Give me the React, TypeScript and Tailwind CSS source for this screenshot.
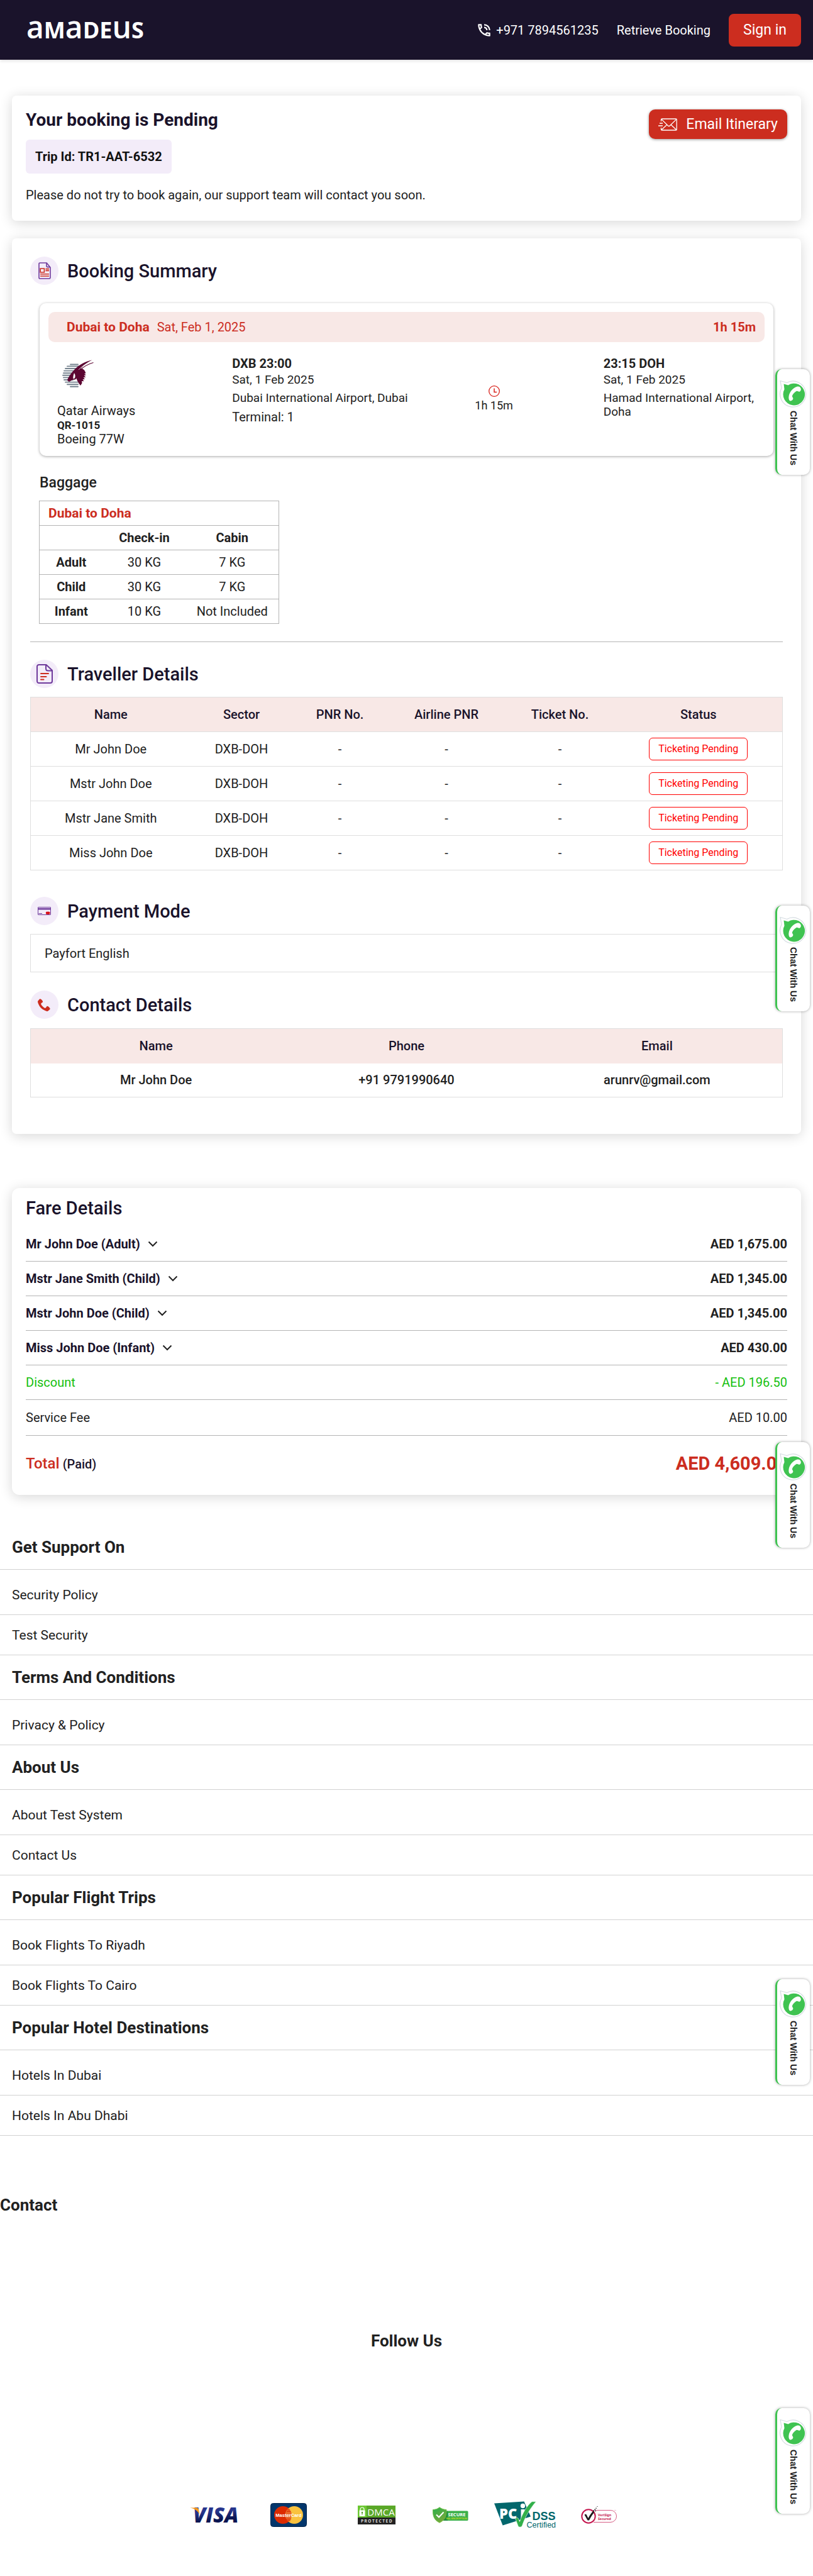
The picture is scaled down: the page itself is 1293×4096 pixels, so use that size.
import React from "react";
import { MdOutlinePhoneInTalk } from "react-icons/md";
import { ImPhone } from "react-icons/im";

const travellers = ["Mr John Doe", "Mstr John Doe", "Mstr Jane Smith", "Miss John Doe"];

const baggage = [
  ["Adult", "30 KG", "7 KG"],
  ["Child", "30 KG", "7 KG"],
  ["Infant", "10 KG", "Not Included"],
];

const fares = [
  ["Mr John Doe (Adult)", "AED 1,675.00"],
  ["Mstr Jane Smith (Child)", "AED 1,345.00"],
  ["Mstr John Doe (Child)", "AED 1,345.00"],
  ["Miss John Doe (Infant)", "AED 430.00"],
];

const footerGroups = [
  { title: "Get Support On", links: ["Security Policy", "Test Security"] },
  { title: "Terms And Conditions", links: ["Privacy & Policy"] },
  { title: "About Us", links: ["About Test System", "Contact Us"] },
  { title: "Popular Flight Trips", links: ["Book Flights To Riyadh", "Book Flights To Cairo"] },
  { title: "Popular Hotel Destinations", links: ["Hotels In Dubai", "Hotels In Abu Dhabi"] },
];

function Logo() {
  return (
    <a
      href="#"
      aria-label="Amadeus"
      className="flex items-baseline pb-2.5 font-['Open_Sans',sans-serif] leading-none text-white"
    >
      <span className="text-[48px] font-semibold">a</span>
      <span className="text-[36px] font-bold">M</span>
      <span className="text-[48px] font-semibold">a</span>
      <span className="text-[36px] font-bold">DE</span>
      <span className="text-[48px] font-semibold">u</span>
      <span className="text-[36px] font-bold">S</span>
    </a>
  );
}

function MailIcon() {
  return (
    <svg width="30" height="20" viewBox="0 0 30 20" fill="none" stroke="#fff" strokeWidth="1.3">
      <path d="M4.5 5V2.2C4.5 1.4 5 1 5.8 1H28c.8 0 1.2.4 1.2 1.2v15.6c0 .8-.4 1.2-1.2 1.2H5.8c-.8 0-1.3-.4-1.3-1.2V15" />
      <path d="M5 1.6 15.5 12c.8.8 1.9.8 2.7 0L28.8 1.6M5 18.4l8.6-8M28.8 18.4l-8.6-8" />
      <path d="M2 8h5M0 12h7" />
    </svg>
  );
}

function SummaryIcon() {
  return (
    <svg width="20" height="27" viewBox="0 0 20 27" fill="none" strokeWidth="1.6">
      <path d="M2.5 1h10.7L19 8.2v16.3c0 .9-.6 1.5-1.5 1.5h-15C1.6 26 1 25.4 1 24.5v-22C1 1.6 1.6 1 2.5 1Z" stroke="#6f3a9c" />
      <path d="M13 1.2v4.6c0 1.2.6 1.8 1.8 1.8h4" stroke="#6f3a9c" />
      <path d="M3.2 10h6.2v6H3.2Z" stroke="#cc2d1f" />
      <path d="M11.5 10.6H17M11.5 13.4H17M3 18.800h14M3 22h14" stroke="#cc2d1f" />
    </svg>
  );
}

function DocumentIcon() {
  return (
    <svg width="26" height="31" viewBox="0 0 26 31" fill="none" strokeWidth="2" strokeLinecap="round" strokeLinejoin="round">
      <path d="M4 1h11.5L25 10v17c0 1.8-1.2 3-3 3H4c-1.8 0-3-1.2-3-3V4c0-1.8 1.2-3 3-3Z" stroke="#6f3a9c" />
      <path d="M15 1.5V7c0 2.2 1.2 3.5 3.5 3.5h6" stroke="#6f3a9c" />
      <path d="M7 15h12M7 20h8.5M7 24.5h4.5" stroke="#cc2d1f" />
    </svg>
  );
}

function CardIcon() {
  return (
    <svg width="21" height="13" viewBox="0 0 21 13" fill="none">
      <rect x="0.5" y="0.5" width="20" height="12" rx="0.5" stroke="#6f3a9c" />
      <rect x="0" y="2" width="21" height="2.5" fill="#6f3a9c" />
      <path d="M1.5 10.5H7" stroke="#6f3a9c" />
      <circle cx="15" cy="9.8" r="2.2" fill="#d8101a" />
      <circle cx="17.4" cy="9.8" r="2.2" fill="#d8101a" />
    </svg>
  );
}

function ClockIcon() {
  return (
    <svg width="18" height="18" viewBox="0 0 18 18" fill="none" stroke="#d8201a">
      <circle cx="9" cy="9" r="8.3" strokeWidth="1.3" />
      <path d="M9 4.5v6h4" strokeWidth="1.5" />
    </svg>
  );
}

function OryxLogo() {
  return (
    <svg width="50" height="44" viewBox="0 0 50 44" fill="none">
      <path
        d="M13 7.5h12M8 10.4h18M5 14h17M3 17.6h17M2 21.2h16M1 24.8h14M2 28.4h12M3 32h14M5 35.6h20M8 39.2h17M13 42.7h12"
        stroke="#76838f"
        strokeWidth="1.9"
        strokeLinecap="round"
      />
      <path
        d="M47.5.5C40 4 34 8.5 29.5 14c3 0 5.5 2 6.5 4l1.5 3.6-2.500.6 3 2-3.500 1 3 2.500-4 .6 2.500 2.600-3.500.4 2 3-3.500-.2.5 3.200-2.500 3.700c-3.500-4-5.500-8-6.500-11.500-1 2-3 2.500-5 2l-6.500 3.400c-1-.5-2.500-1-3-3 2.500-5.500 6.500-11 12-16.800C27 8 36 2.500 47.500.5Z"
        fill="#5c0632"
      />
      <path d="M49.5 4.5C41 7 34.5 10.5 29 16" stroke="#5c0632" strokeWidth="1.1" />
      <path d="M19 21c-1.5 4-2 7-1.500 9.500l2.500-1.200c1-2.600.8-5.800-1-8.300Z" fill="#fff" />
      <path d="M46.5 1.8C38 6 31 10.5 26 16" stroke="#fff" strokeWidth="0.7" />
    </svg>
  );
}

function Chevron() {
  return (
    <svg width="16" height="10" viewBox="0 0 16 10" fill="none" stroke="#212121" strokeWidth="2">
      <path d="m1.5 1.5 6.5 6.5 6.5-6.5" />
    </svg>
  );
}

function ChatBadge({ position }: { position: string }) {
  return (
    <button
      type="button"
      className={
        "absolute right-[5px] z-10 flex h-[168px] w-[55px] flex-col items-center rounded-[10px] border-l-[3px] border-[#3fc351] bg-white pt-4 shadow-[0_0_4px_rgba(0,0,0,0.35)] " +
        position
      }
    >
      <svg width="46" height="46" viewBox="0 0 46 46" fill="none">
        <path
          d="M2 2.5 12.5 5.5A20.5 20.5 0 1 1 4 14Z"
          fill="#fff"
          stroke="#d6dde2"
          strokeWidth="1.3"
          strokeLinejoin="round"
        />
        <path d="M7.5 7.5 14.5 9.5A17.3 17.3 0 1 1 8.5 16Z" fill="#3fc351" />
        <path
          d="M34 13.5c1.5 2 .8 5.5-1.2 6.2-1.5.5-3.6-1.7-5.3-.7-3 1.7-5.3 4.3-6.5 7.2-.6 1.8 1.3 2.8 1.4 4.2.1 2.4-3 4.8-5.2 3.8-1.5-.7-2-3.5-1.8-6C16.2 20.5 21.5 14 28.5 11.8c2-.6 4.300-.2 5.500 1.700Z"
          fill="#fff"
        />
      </svg>
      <span className="mt-1 font-['Liberation_Sans',Arial,sans-serif] text-sm leading-4 font-bold text-[#212121] [writing-mode:vertical-rl]">
        Chat With Us
      </span>
    </button>
  );
}

function SectionTitle({ icon, children }: { icon: React.ReactNode; children: React.ReactNode }) {
  return (
    <div className="flex items-center gap-3.5">
      <span className="flex size-[45px] items-center justify-center rounded-full bg-[#f3ecf9]">{icon}</span>
      <h2 className="text-[29px] leading-[34px] font-medium text-[#1a132b]">{children}</h2>
    </div>
  );
}

function VisaLogo() {
  return (
    <svg width="86" height="48" viewBox="-4 -11 86 48">
      <defs>
        <linearGradient id="visa" x1="0" y1="0" x2="0.15" y2="1">
          <stop offset="0.45" stopColor="#26358c" />
          <stop offset="0.75" stopColor="#0a1550" />
        </linearGradient>
      </defs>
      <text x="5" y="25" fontFamily="Open Sans" fontWeight="800" fontStyle="italic" fontSize="33" fill="url(#visa)">
        VISA
      </text>
      <path d="M0 1.5h10c2.4 0 3.5 1 4 3l1.5 8C12.5 6 7 2.8 0 1.5Z" fill="#f79a1c" />
    </svg>
  );
}

function MasterCardLogo() {
  return (
    <svg width="58" height="38" viewBox="0 0 58 38">
      <rect x="0.5" y="0.5" width="57" height="37" rx="4" fill="#03366b" stroke="#02244a" />
      <circle cx="20" cy="19" r="14" fill="#dd2b00" />
      <circle cx="38" cy="19" r="14" fill="#fac23e" />
      <path d="M29 8.3a14 14 0 0 1 0 21.4 14 14 0 0 1 0-21.4Z" fill="#e8682a" />
      <path d="M27 11h4M26 13.5h6M25 25.5h8M26 28h6" stroke="#dd2b00" strokeWidth="1" />
      <text x="29" y="21.5" textAnchor="middle" fontFamily="Liberation Sans" fontWeight="700" fontSize="7.5" fill="#fff">
        MasterCard
      </text>
    </svg>
  );
}

function DmcaLogo() {
  return (
    <svg width="60" height="30" viewBox="0 0 60 30">
      <rect width="60" height="19" fill="#5aa828" />
      <rect width="14" height="19" fill="#6cc832" />
      <rect y="19" width="60" height="11" fill="#222" />
      <rect x="2.5" y="7.5" width="9" height="9.5" rx="0.8" fill="#fff" />
      <path d="M4 8V6a3 3 0 0 1 6 0v2" stroke="#fff" strokeWidth="1.2" fill="none" />
      <circle cx="7" cy="11" r="1.2" fill="#4c9a20" />
      <path d="M7 11v3.5" stroke="#4c9a20" strokeWidth="1.2" />
      <text x="37" y="15.5" textAnchor="middle" fontFamily="Open Sans" fontSize="15" fill="#fff">
        DMCA
      </text>
      <text x="30.5" y="27" textAnchor="middle" fontFamily="Open Sans" fontWeight="600" fontSize="6.5" letterSpacing="1.6" fill="#fff">
        PROTECTED
      </text>
    </svg>
  );
}

function SecureLogo() {
  return (
    <svg width="57" height="26" viewBox="0 0 57 26">
      <defs>
        <linearGradient id="shield" x1="0" y1="0" x2="0.6" y2="1">
          <stop offset="0" stopColor="#27b04c" />
          <stop offset="1" stopColor="#78a83a" />
        </linearGradient>
      </defs>
      <rect x="17" y="6.5" width="39.5" height="15.5" rx="1.5" fill="#3bb04a" />
      <path d="M17 12 24 6.5V22h-7Z" fill="#1f8a3b" />
      <path
        d="M11 .7c3 2.3 6.5 3.5 11 3.8C22.5 15 20 21 11 25.3 2.5 21 0 15 .5 4.5 5 4.2 8.5 3 11 .7Z"
        fill="url(#shield)"
        stroke="#6fbe3c"
        strokeWidth="0.8"
      />
      <path d="m6 12.5 4 4 7.5-8" stroke="#fff" strokeWidth="2" fill="none" />
      <text x="38.5" y="15" textAnchor="middle" fontFamily="Open Sans" fontWeight="700" fontSize="7.5" fill="#fff">
        SECURE
      </text>
      <text x="38" y="20" textAnchor="middle" fontFamily="Liberation Sans" fontWeight="700" fontSize="3.8" fill="#c5dc1e">
        SSL ENCRYPTION
      </text>
    </svg>
  );
}

function PciLogo() {
  return (
    <svg width="106" height="49" viewBox="-4 -3 106 49">
      <path d="M0 3.5 47.5.5 58 24.5 13.5 38.5Z" fill="#02676c" />
      <text x="8" y="27.5" fontFamily="Open Sans" fontWeight="800" fontSize="22" fill="#fff">
        PC
      </text>
      <path d="M42.5 13h6v16l-6 1Z" fill="#fff" />
      <circle cx="45.5" cy="7.5" r="3.7" fill="#fff" />
      <path
        d="M33.5 27.5c2-1.5 4.5-1.5 5.5 1l1.5 4C45 19 52 7 60 .7h6.500C57 12 49.500 24 44.500 39c-.7 2.500-5.500 3-6.500.5Z"
        fill="#32b04a"
        stroke="#fff"
        strokeWidth="0.6"
      />
      <text x="60.5" y="29.5" fontFamily="Liberation Sans" fontWeight="700" fontSize="18" fill="#02676c">
        DSS
      </text>
      <text x="51.5" y="42" fontFamily="Liberation Sans" fontSize="12.5" fill="#02676c">
        Certified
      </text>
    </svg>
  );
}

function VerisignLogo() {
  return (
    <svg width="58" height="30" viewBox="0 0 58 30">
      <path d="M22 7.5h25a9.5 9.5 0 0 1 0 19H20" fill="none" stroke="#c4174f" strokeWidth="0.7" />
      <circle cx="12" cy="17" r="10.7" fill="#fff" stroke="#c4174f" strokeWidth="2" />
      <path d="M5.5 14.5c1.5-1 3-1 3.5.5l2.5 5c2-4 4.5-8 7.5-11l2 2c-3.5 4-5.5 7.5-8 12.5h-2.5Z" fill="#1d1a1c" />
      <path d="M19 7.5h2v2h-2zM21.5 5.5H23v2h-1.5zM23.5 3.5h1.2V5h-1.2zM22.5 8.2h1.3v1.3h-1.3zM25.5 1h1v1h-1z" fill="#1d1a1c" />
      <text x="27" y="17" fontFamily="Open Sans" fontWeight="700" fontSize="5.2" fill="#c4174f">
        VeriSign
      </text>
      <text x="27" y="23" fontFamily="Open Sans" fontWeight="700" fontSize="5.2" fill="#c4174f">
        Secured
      </text>
      <text x="53" y="8" fontFamily="Open Sans" fontSize="2" fill="#c4174f">
        TM
      </text>
    </svg>
  );
}

export default function App() {
  const card = "rounded-[7px] bg-white shadow-[0_3px_20px_rgba(0,0,0,0.16)]";
  return (
    <div className="relative bg-white font-['Roboto',sans-serif] text-xl leading-6 text-[#212121]">
      <header className="flex h-[95px] items-center justify-between bg-[#1a132b] pr-[19px] pl-[42px] text-white shadow-[0_2px_5px_rgba(0,0,0,0.12)]">
        <Logo />
        <nav className="flex items-center">
          <a href="tel:+9717894561235" className="flex items-center gap-1.5">
            <MdOutlinePhoneInTalk size={26} />
            +971 7894561235
          </a>
          <a href="#" className="ml-[29px]">
            Retrieve Booking
          </a>
          <button type="button" className="ml-[29px] h-[52px] w-[115px] rounded-[8px] bg-[#cc2d1f] text-[23px]">
            Sign in
          </button>
        </nav>
      </header>

      <main className="px-[19px] pt-[57px]">
        <section className={card + " flex items-start justify-between px-[22px] pt-[22px] pb-[29px]"}>
          <div>
            <h1 className="text-[28px] leading-[34px] font-bold text-[#1a132b]">Your booking is Pending</h1>
            <p className="mt-3.5 inline-flex h-[54px] items-center rounded-[6px] bg-[#f3ecf9] px-[15px] font-bold text-[#111]">
              Trip Id: TR1-AAT-6532
            </p>
            <p className="mt-[22px]">Please do not try to book again, our support team will contact you soon.</p>
          </div>
          <button
            type="button"
            className="flex h-[47px] items-center gap-3.5 rounded-[10px] bg-[#cc2d1f] px-[15px] text-[23px] text-white shadow-[0_1px_4px_rgba(0,0,0,0.4)]"
          >
            <MailIcon />
            Email Itinerary
          </button>
        </section>

        <section className={card + " mt-7 px-[29px] pt-[29px] pb-[58px]"}>
          <SectionTitle icon={<SummaryIcon />}>Booking Summary</SectionTitle>

          <div className="mx-[15px] mt-[29px] rounded-[10px] bg-white px-3.5 pt-3.5 pb-4 shadow-[0_1px_4px_rgba(0,0,0,0.35)]">
            <div className="flex h-12 items-center rounded-[10px] bg-[#f8e8e6] pr-3.5 pl-[29px] text-[#cc2d1f]">
              <strong className="text-[21px] font-bold">Dubai to Doha</strong>
              <span className="ml-3">Sat, Feb 1, 2025</span>
              <strong className="ml-auto font-bold">1h 15m</strong>
            </div>
            <div className="grid grid-cols-[278fr_291fr_250fr_291fr] px-3.5 pt-[22px]">
              <div>
                <div className="pt-1.5 pl-2">
                  <OryxLogo />
                </div>
                <p className="mt-[25px]">Qatar Airways</p>
                <p className="text-[17px] leading-[22px] font-bold">QR-1015</p>
                <p className="leading-[22px]">Boeing 77W</p>
              </div>
              <div className="text-[19px] leading-[22px]">
                <p className="text-xl leading-[25px] font-bold">DXB 23:00</p>
                <p className="leading-[25px]">Sat, 1 Feb 2025</p>
                <p className="mt-1.5 whitespace-nowrap">Dubai International Airport, Dubai</p>
                <p className="mt-2 text-xl leading-[22px]">Terminal: 1</p>
              </div>
              <div className="flex flex-col items-center pt-[47px] text-[18px] leading-5">
                <ClockIcon />
                <p className="mt-1">1h 15m</p>
              </div>
              <div className="pl-[49px] text-[19px] leading-[22px]">
                <p className="text-xl leading-[25px] font-bold">23:15 DOH</p>
                <p className="leading-[25px]">Sat, 1 Feb 2025</p>
                <p className="mt-1.5">Hamad International Airport, Doha</p>
              </div>
            </div>
          </div>

          <h3 className="mt-[29px] ml-[15px] text-[23px] leading-7 font-medium">Baggage</h3>
          <table className="mt-3.5 ml-3.5 w-[381px] table-fixed border-collapse border border-[#b4b4b4] text-center">
            <colgroup>
              <col className="w-[101px]" />
              <col className="w-[132px]" />
              <col className="w-[148px]" />
            </colgroup>
            <thead>
              <tr className="h-[39px] border border-[#b4b4b4]">
                <th colSpan={3} className="pl-3.5 text-left text-[21px] font-bold text-[#cc2d1f]">
                  Dubai to Doha
                </th>
              </tr>
              <tr className="h-[39px] border border-[#b4b4b4]">
                <td />
                <th className="font-bold">Check-in</th>
                <th className="font-bold">Cabin</th>
              </tr>
            </thead>
            <tbody>
              {baggage.map(([kind, checkin, cabin]) => (
                <tr key={kind} className="h-[39px] border border-[#b4b4b4]">
                  <th className="font-bold">{kind}</th>
                  <td>{checkin}</td>
                  <td>{cabin}</td>
                </tr>
              ))}
            </tbody>
          </table>

          <hr className="my-7 border-[#b4b4b4]" />

          <SectionTitle icon={<DocumentIcon />}>Traveller Details</SectionTitle>
          <table className="mt-3.5 w-full table-fixed border-collapse border border-[#dfdfdf] text-center">
            <colgroup>
              <col className="w-[255px]" />
              <col className="w-[161px]" />
              <col className="w-[152px]" />
              <col className="w-[187px]" />
              <col className="w-[174px]" />
              <col className="w-[267px]" />
            </colgroup>
            <thead>
              <tr className="h-[55px] border-b border-[#dfdfdf] bg-[#f8e8e6] text-[#1a132b]">
                {["Name", "Sector", "PNR No.", "Airline PNR", "Ticket No.", "Status"].map((label) => (
                  <th key={label} className="font-medium">
                    {label}
                  </th>
                ))}
              </tr>
            </thead>
            <tbody>
              {travellers.map((name) => (
                <tr key={name} className="h-[55px] border-b border-[#dfdfdf]">
                  <td>{name}</td>
                  <td>DXB-DOH</td>
                  <td>-</td>
                  <td>-</td>
                  <td>-</td>
                  <td>
                    <span className="inline-flex h-9 items-center rounded-[6px] border border-[#ff0000] px-3.5 text-base text-[#ff0000]">
                      Ticketing Pending
                    </span>
                  </td>
                </tr>
              ))}
            </tbody>
          </table>

          <div className="mt-[42px]">
            <SectionTitle icon={<CardIcon />}>Payment Mode</SectionTitle>
          </div>
          <p className="mt-3.5 flex h-[61px] items-center border border-[#dfdfdf] px-[22px]">Payfort English</p>

          <div className="mt-[29px]">
            <SectionTitle icon={<ImPhone size={21} color="#cc2d1f" />}>Contact Details</SectionTitle>
          </div>
          <table className="mt-[15px] w-full table-fixed border-collapse border border-[#dfdfdf] text-center">
            <thead>
              <tr className="h-[55px] bg-[#f8e8e6] text-[#1a132b]">
                <th className="font-medium">Name</th>
                <th className="font-medium">Phone</th>
                <th className="font-medium">Email</th>
              </tr>
            </thead>
            <tbody>
              <tr className="h-[54px] font-medium">
                <td>Mr John Doe</td>
                <td>+91 9791990640</td>
                <td>arunrv@gmail.com</td>
              </tr>
            </tbody>
          </table>
        </section>

        <section className="mt-[86px] rounded-[12px] bg-white px-[22px] pt-[15px] shadow-[0_3px_20px_rgba(0,0,0,0.16)]">
          <h2 className="mb-[13px] text-[29px] leading-[34px] font-medium text-[#1a132b]">Fare Details</h2>
          {fares.map(([name, amount]) => (
            <div key={name} className="flex h-[55px] items-center border-b border-[#b4b4b4] font-bold">
              <button type="button" className="flex items-center gap-3 text-[#1a132b]">
                {name}
                <Chevron />
              </button>
              <span className="ml-auto">{amount}</span>
            </div>
          ))}
          <div className="flex h-[55px] items-center justify-between border-b border-[#b4b4b4] text-[#16c00f]">
            <span>Discount</span>
            <span>- AED 196.50</span>
          </div>
          <div className="flex h-[57px] items-center justify-between border-b border-[#b4b4b4]">
            <span>Service Fee</span>
            <span>AED 10.00</span>
          </div>
          <div className="flex h-[94px] items-center justify-between pb-1.5">
            <span className="text-[#1a132b]">
              <span className="text-2xl font-medium text-[#cc2d1f]">Total</span> <span className="font-medium">(Paid)</span>
            </span>
            <strong className="text-[29px] font-bold text-[#cc2d1f]">AED 4,609.00</strong>
          </div>
        </section>
      </main>

      <footer className="mt-12">
        {footerGroups.map((group) => (
          <section key={group.title}>
            <h3 className="flex h-[71px] items-center border-b border-[#d2d2d2] px-[19px] text-[26px] font-bold">
              {group.title}
            </h3>
            <ul className="pt-2">
              {group.links.map((link) => (
                <li key={link} className="flex h-16 items-center border-b border-[#d2d2d2] px-[19px] text-[21px]">
                  <a href="#">{link}</a>
                </li>
              ))}
            </ul>
          </section>
        ))}
        <h3 className="mt-[95px] text-[26px] leading-[30px] font-bold">Contact</h3>
        <h3 className="mt-[186px] text-center text-[26px] leading-[30px] font-bold">Follow Us</h3>
        <div className="mt-[237px] mb-[71px] flex h-[49px] items-center justify-center">
          <span className="flex w-[118px] justify-center">
            <VisaLogo />
          </span>
          <span className="mr-[22px] flex w-[118px] justify-center">
            <MasterCardLogo />
          </span>
          <span className="flex w-[118px] justify-center">
            <DmcaLogo />
          </span>
          <span className="flex w-[118px] justify-center">
            <SecureLogo />
          </span>
          <span className="flex w-[118px] justify-center">
            <PciLogo />
          </span>
          <span className="flex w-[118px] justify-center">
            <VerisignLogo />
          </span>
        </div>
      </footer>

      <ChatBadge position="top-[587px]" />
      <ChatBadge position="top-[1440px]" />
      <ChatBadge position="top-[2293px]" />
      <ChatBadge position="top-[3147px]" />
      <ChatBadge position="top-[3829px]" />
    </div>
  );
}
